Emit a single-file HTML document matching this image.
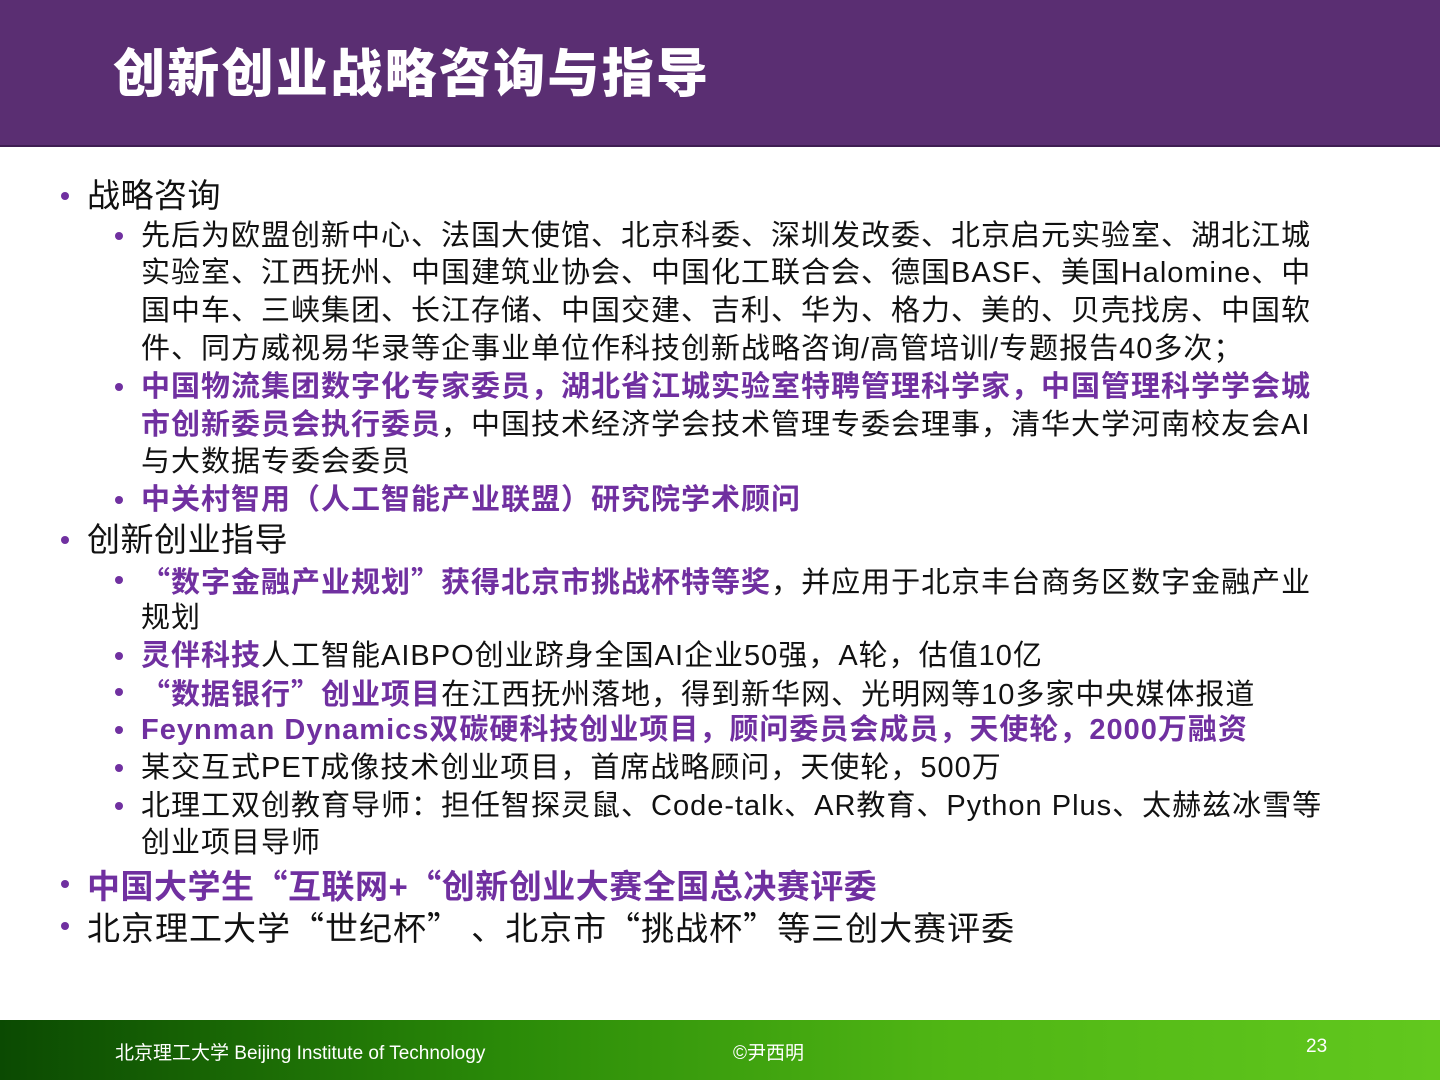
<!DOCTYPE html>
<html><head><meta charset="utf-8"><style>
*{margin:0;padding:0;box-sizing:border-box}
body{width:1440px;height:1080px;position:relative;background:#fff;overflow:hidden;font-family:"Liberation Sans","Noto Sans CJK SC",sans-serif;color:#111}
#hd{position:absolute;left:0;top:0;width:1440px;height:147px;background:#5a2e72;border-bottom:2px solid #3e1e52}
#hd h1{position:absolute;left:113px;top:40px;font-size:52px;line-height:70px;color:#fff;font-weight:900;letter-spacing:2.3px;white-space:nowrap}
.l{position:absolute;white-space:nowrap;line-height:38px}
.a{left:87px;font-size:33px;letter-spacing:0.5px}
.b{left:141px;font-size:29px;letter-spacing:1px}
.q{font-family:"Noto Sans CJK SC",sans-serif}
.d{position:absolute;width:8px;height:8px;border-radius:50%;background:#7030a0}
.p{color:#7030a0;font-weight:bold}
#ft{position:absolute;left:0;top:1020px;width:1440px;height:60px;background:linear-gradient(90deg,#0b4a02 0%,#2a8a08 35%,#4fb514 65%,#62c81e 100%);color:#fff;font-size:19px}
#ft span{position:absolute;top:18px;white-space:nowrap}
</style></head><body>
<div id="hd"><h1>创新创业战略咨询与指导</h1></div>

<div class="d" style="left:61px;top:192px"></div><div class="l a" style="top:177px">战略咨询</div>
<div class="d" style="left:115px;top:232px"></div>
<div class="l b" style="top:217px">先后为欧盟创新中心、法国大使馆、北京科委、深圳发改委、北京启元实验室、湖北江城</div>
<div class="l b" style="top:254px">实验室、江西抚州、中国建筑业协会、中国化工联合会、德国BASF、美国Halomine、中</div>
<div class="l b" style="top:292px">国中车、三峡集团、长江存储、中国交建、吉利、华为、格力、美的、贝壳找房、中国软</div>
<div class="l b" style="top:330px">件、同方威视易华录等企事业单位作科技创新战略咨询/高管培训/专题报告40多次；</div>
<div class="d" style="left:115px;top:383px"></div>
<div class="l b p" style="top:368px">中国物流集团数字化专家委员，湖北省江城实验室特聘管理科学家，中国管理科学学会城</div>
<div class="l b" style="top:406px"><span class="p">市创新委员会执行委员</span>，中国技术经济学会技术管理专委会理事，清华大学河南校友会AI</div>
<div class="l b" style="top:443px">与大数据专委会委员</div>
<div class="d" style="left:115px;top:496px"></div>
<div class="l b p" style="top:481px">中关村智用（人工智能产业联盟）研究院学术顾问</div>
<div class="d" style="left:61px;top:536px"></div><div class="l a" style="top:521px">创新创业指导</div>
<div class="d" style="left:115px;top:576px"></div>
<div class="l b" style="top:561px"><span class="p"><span class="q">“</span>数字金融产业规划<span class="q">”</span>获得北京市挑战杯特等奖</span>，并应用于北京丰台商务区数字金融产业</div>
<div class="l b" style="top:599px">规划</div>
<div class="d" style="left:115px;top:652px"></div>
<div class="l b" style="top:637px"><span class="p">灵伴科技</span>人工智能AIBPO创业跻身全国AI企业50强，A轮，估值10亿</div>
<div class="d" style="left:115px;top:688px"></div>
<div class="l b" style="top:673px"><span class="p"><span class="q">“</span>数据银行<span class="q">”</span>创业项目</span>在江西抚州落地，得到新华网、光明网等10多家中央媒体报道</div>
<div class="d" style="left:115px;top:726px"></div>
<div class="l b p" style="top:711px">Feynman Dynamics双碳硬科技创业项目，顾问委员会成员，天使轮，2000万融资</div>
<div class="d" style="left:115px;top:764px"></div>
<div class="l b" style="top:749px">某交互式PET成像技术创业项目，首席战略顾问，天使轮，500万</div>
<div class="d" style="left:115px;top:802px"></div>
<div class="l b" style="top:787px">北理工双创教育导师：担任智探灵鼠、Code-talk、AR教育、Python Plus、太赫兹冰雪等</div>
<div class="l b" style="top:824px">创业项目导师</div>
<div class="d" style="left:61px;top:880px"></div><div class="l a p" style="top:865px">中国大学生<span class="q">“</span>互联网+<span class="q">“</span>创新创业大赛全国总决赛评委</div>
<div class="d" style="left:61px;top:922px"></div><div class="l a" style="top:907px;letter-spacing:1px">北京理工大学<span class="q">“</span>世纪杯<span class="q">”</span> 、北京市<span class="q">“</span>挑战杯<span class="q">”</span>等三创大赛评委</div>

<div id="ft"><span style="left:115px">北京理工大学 Beijing Institute of Technology</span><span style="left:733px">©尹西明</span><span style="left:1306px;top:16px">23</span></div>
</body></html>
